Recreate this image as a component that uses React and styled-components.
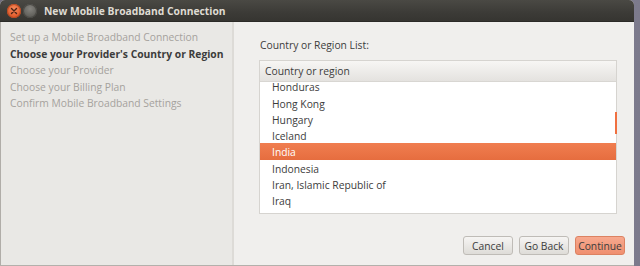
import React from "react";
import styled, { createGlobalStyle } from "styled-components";

const Global = createGlobalStyle`
  html, body { margin: 0; padding: 0; }
  body {
    width: 640px; height: 266px; overflow: hidden;
    background: #8d8b9c;
    font-family: "Open Sans", Lato, sans-serif;
  }
`;

const Screen = styled.div`
  display: flex;
  width: 640px;
  height: 266px;
  background: linear-gradient(90deg, #6f6d7f, #9d9bad 40%, #7c7a8c);
`;

const Window = styled.div`
  width: 634px;
  height: 265px;
  display: flex;
  flex-direction: column;
  border-radius: 5px 5px 0 0;
  overflow: hidden;
  border-bottom: 1px solid #b3b0ab;
  background: #f0efed;
`;

const TitleBar = styled.div`
  height: 21px;
  flex: none;
  display: flex;
  align-items: center;
  gap: 2px;
  padding-left: 7px;
  background: linear-gradient(#4a4944, #3c3b37 60%, #363531);
  border-bottom: 1px solid #2b2a27;
`;

const WinButton = styled.div`
  width: 14px;
  height: 14px;
  border-radius: 50%;
  display: flex;
  align-items: center;
  justify-content: center;
  background: ${(p) => (p.close ? "radial-gradient(circle at 50% 35%, #f48a5c, #e05a2a 70%)" : "radial-gradient(circle at 50% 35%, #85847f, #5e5d58 70%)")};
  box-shadow: inset 0 0 0 1px ${(p) => (p.close ? "#b94a22" : "#4a4945")};
`;

const Title = styled.div`
  margin-left: 5px;
  color: #dfdbd2;
  font-weight: 700;
  font-size: 10.3px;
`;

const Body = styled.div`
  flex: 1;
  display: flex;
`;

const Sidebar = styled.div`
  width: 234px;
  flex: none;
  background: #e9e8e5;
  border-left: 1px solid #b0ada8;
  border-right: 2px solid #dddbd7;
  padding: 7px 0 0 9px;
  box-sizing: border-box;
  display: flex;
  flex-direction: column;
`;

const Step = styled.div`
  height: 16.5px;
  line-height: 16.5px;
  font-size: 10.3px;
  white-space: nowrap;
  color: ${(p) => (p.active ? "#3c3c3c" : "#a5a29d")};
  font-weight: ${(p) => (p.active ? 700 : 400)};
`;

const Main = styled.div`
  flex: 1;
  display: flex;
  flex-direction: column;
  padding: 15px 9px 0 25px;
  background: #f0efed;
`;

const Label = styled.div`
  font-size: 10.3px;
  color: #3c3c3c;
  height: 16px;
  line-height: 16px;
  margin-left: 1px;
`;

const ListBox = styled.div`
  margin-top: 7px;
  margin-right: 8px;
  height: 154px;
  box-sizing: border-box;
  border: 1px solid #d6d4d0;
  background: #ffffff;
  display: flex;
  flex-direction: column;
  position: relative;
`;

const Header = styled.div`
  height: 21px;
  flex: none;
  box-sizing: border-box;
  padding-left: 5px;
  display: flex;
  align-items: center;
  font-size: 10.3px;
  color: #3c3c3c;
  background: linear-gradient(#f7f6f4, #e4e2df);
  border-bottom: 1px solid #d8d6d2;
`;

const Rows = styled.div`
  flex: 1;
`;

const Row = styled.div`
  height: 16.3px;
  line-height: 18.4px;
  padding-left: 12px;
  font-size: 10.3px;
  color: ${(p) => (p.selected ? "#ffffff" : "#3c3c3c")};
  background: ${(p) => (p.selected ? "linear-gradient(#f07e50, #e66d3f)" : "transparent")};
  &:first-child { height: 12.6px; line-height: 11px; }
`;

const ScrollMark = styled.div`
  position: absolute;
  right: -1px;
  top: 51px;
  width: 2px;
  height: 22px;
  background: #f07040;
`;

const Buttons = styled.div`
  display: flex;
  justify-content: flex-end;
  gap: 6px;
  margin-top: 22px;
`;

const Button = styled.button`
  width: 50px;
  height: 19px;
  padding: 0;
  box-sizing: border-box;
  font-family: inherit;
  font-size: 10.3px;
  color: #3c3c3c;
  border-radius: 3px;
  border: 1px solid ${(p) => (p.primary ? "#dc8262" : "#bfbcb7")};
  background: ${(p) => (p.primary ? "linear-gradient(#f7a98e, #f08f70)" : "linear-gradient(#f6f5f3, #dedcd8)")};
`;

const countries = [
  "Honduras",
  "Hong Kong",
  "Hungary",
  "Iceland",
  "India",
  "Indonesia",
  "Iran, Islamic Republic of",
  "Iraq",
];

const steps = [
  "Set up a Mobile Broadband Connection",
  "Choose your Provider's Country or Region",
  "Choose your Provider",
  "Choose your Billing Plan",
  "Confirm Mobile Broadband Settings",
];

export default function App() {
  return (
    <>
      <Global />
      <Screen>
        <Window>
          <TitleBar>
            <WinButton close>
              <svg width="8" height="8" viewBox="0 0 8 8">
                <path d="M1.5 1.5 L6.5 6.5 M6.5 1.5 L1.5 6.5" stroke="#4a2316" strokeWidth="1.4" strokeLinecap="round" />
              </svg>
            </WinButton>
            <WinButton />
            <Title>New Mobile Broadband Connection</Title>
          </TitleBar>
          <Body>
            <Sidebar>
              {steps.map((s, i) => (
                <Step key={s} active={i === 1}>{s}</Step>
              ))}
            </Sidebar>
            <Main>
              <Label>Country or Region List:</Label>
              <ListBox>
                <Header>Country or region</Header>
                <Rows>
                  {countries.map((c) => (
                    <Row key={c} selected={c === "India"}>{c}</Row>
                  ))}
                </Rows>
                <ScrollMark />
              </ListBox>
              <Buttons>
                <Button>Cancel</Button>
                <Button>Go Back</Button>
                <Button primary>Continue</Button>
              </Buttons>
            </Main>
          </Body>
        </Window>
      </Screen>
    </>
  );
}
